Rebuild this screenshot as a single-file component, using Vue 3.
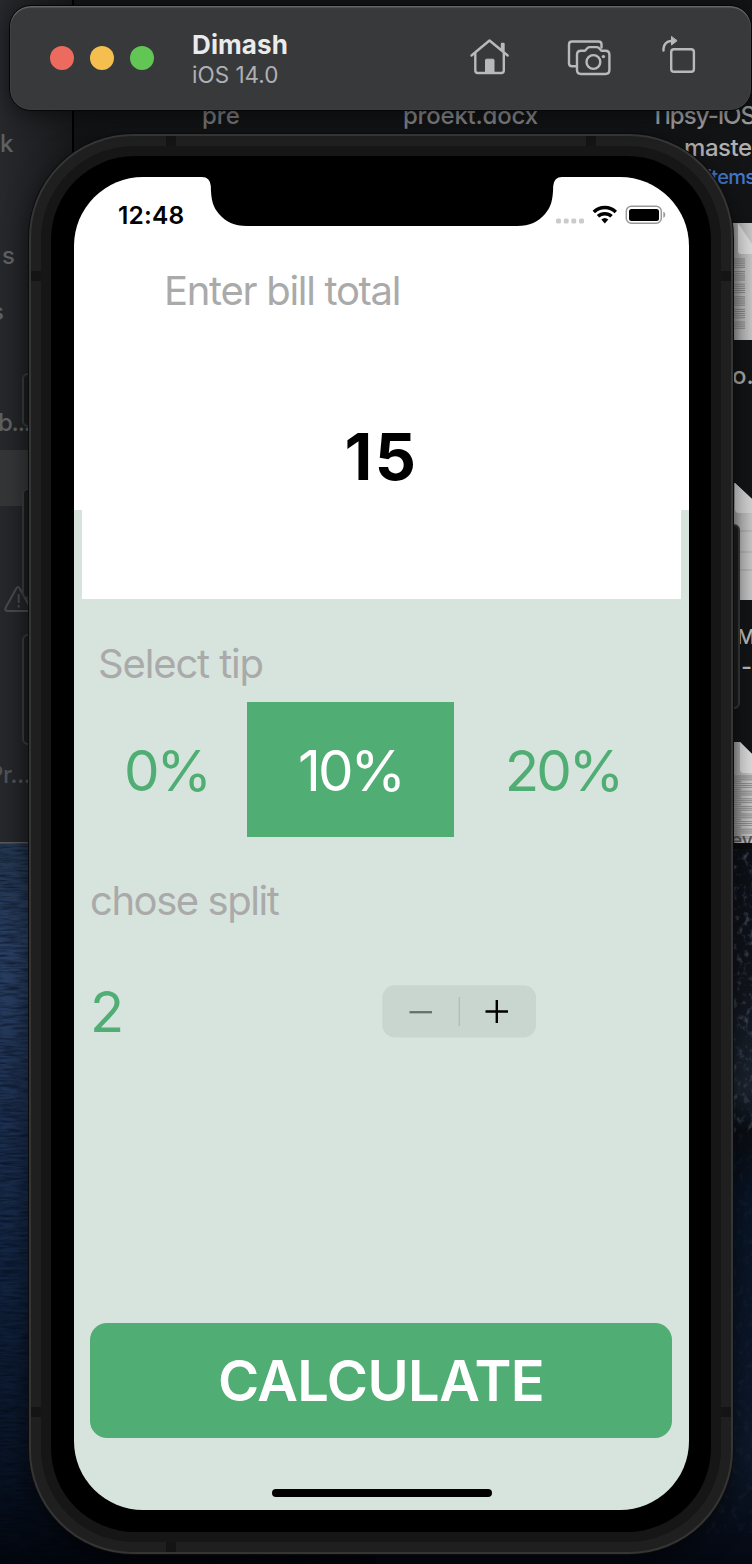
<script setup>
const tips = [
  { label: '0%', kind: 'zero' },
  { label: '10%', kind: 'ten', active: true },
  { label: '20%', kind: 'twenty' }
]
const textLines = Array.from({ length: 34 }, (_, i) => i)
</script>

<template>
  <main class="desktop">
    <svg class="backdrop" width="752" height="1564" viewBox="0 0 752 1564" aria-hidden="true">
      <defs>
        <linearGradient id="sea" x1="0" y1="0" x2="0" y2="1">
          <stop offset="0" stop-color="#23374f" />
          <stop offset=".15" stop-color="#2a4064" />
          <stop offset=".38" stop-color="#1d3050" />
          <stop offset=".6" stop-color="#122440" />
          <stop offset=".85" stop-color="#0a1527" />
          <stop offset="1" stop-color="#03060d" />
        </linearGradient>
        <linearGradient id="rock" x1="0" y1="0" x2="0" y2="1">
          <stop offset="0" stop-color="#0d0f16" />
          <stop offset=".2" stop-color="#11141c" />
          <stop offset=".34" stop-color="#1b242f" />
          <stop offset=".4" stop-color="#0a0d13" />
          <stop offset=".5" stop-color="#081426" />
          <stop offset=".85" stop-color="#0d182a" />
          <stop offset="1" stop-color="#040811" />
        </linearGradient>
        <linearGradient id="side" x1="0" y1="0" x2="1" y2="0">
          <stop offset="0" stop-color="#26282c" />
          <stop offset="1" stop-color="#18191b" />
        </linearGradient>
        <linearGradient id="paper" x1="0" y1="0" x2="1" y2="0">
          <stop offset="0" stop-color="#8d8d8d" />
          <stop offset=".5" stop-color="#b9b9b9" />
          <stop offset="1" stop-color="#c9c9c9" />
        </linearGradient>
        <filter id="waves" x="0" y="0" width="1" height="1" color-interpolation-filters="sRGB">
          <feTurbulence type="fractalNoise" baseFrequency=".05 .4" numOctaves="3" seed="4" />
          <feColorMatrix values="0 0 0 0 0  0 0 0 0 .02  0 0 0 0 .06  2 0 0 0 -.75" />
        </filter>
        <filter id="grit" x="0" y="0" width="1" height="1" color-interpolation-filters="sRGB">
          <feTurbulence type="fractalNoise" baseFrequency=".16 .13" numOctaves="4" seed="9" />
          <feColorMatrix values="0 0 0 0 .28  0 0 0 0 .34  0 0 0 0 .42  3 0 0 0 -1.6" />
        </filter>
      </defs>
      <rect y="843" width="376" height="721" fill="url(#sea)" />
      <rect y="843" width="376" height="721" filter="url(#waves)" opacity=".55" />
      <rect x="376" y="843" width="376" height="721" fill="url(#rock)" />
      <rect x="700" y="843" width="52" height="290" filter="url(#grit)" opacity=".8" />
      <rect x="700" y="1133" width="52" height="400" filter="url(#grit)" opacity=".15" />
      <rect width="74" height="843" fill="url(#side)" />
      <rect y="450" width="60" height="56" fill="#343537" />
      <rect x="74" width="678" height="843" fill="#131416" />
      <rect x="72" width="2" height="843" fill="#000" />
      <rect y="842" width="60" height="1.5" fill="#57585a" />
      <path d="M6 607 16 589q2-4 4 0l10 18q2 4-2 4H8q-4 0-2-4Z" fill="none" stroke="#48494b" stroke-width="2" />
      <path d="M18.700 594v9M18.700 605v2.500" stroke="#48494b" stroke-width="2" />
      <g>
        <path d="M731 223h21v117h-21z" fill="url(#paper)" />
        <path d="M736 223h2v28q0 3 3 3h11v-10l-14-21Z" fill="#ddd" />
        <path d="M731 483h4l17 16v101h-21Z" fill="url(#paper)" />
        <path d="M735 483v26q0 4 4 4h13v-14Z" fill="#d4d4d4" />
        <path d="M731 742h9l12 12v89h-21Z" fill="url(#paper)" />
        <path d="M740 742v27q0 4 4 4h8v-19Z" fill="#ddd" />
        <path v-for="i in textLines" :key="i" :d="`M731 ${259 + i * 2.1}h${i % 6 === 5 ? 0 : 14}`" stroke="#777" stroke-width=".8" />
        <path v-for="i in textLines" :key="'b' + i" :d="`M733 ${776 + i * 1.9}h${i % 4 === 3 ? 8 : 19}`" stroke="#777" stroke-width=".7" />
        <path d="M731 531h21M731 552h21M731 570h21" stroke="#888" stroke-width=".5" />
      </g>
      <g class="finder">
        <text x="202" y="124" fill="#77787a">pre</text>
        <text x="403" y="124" fill="#858688" textLength="135">proekt.docx</text>
        <text x="650" y="124" fill="#a1a1a2" textLength="106">Tipsy-iOS</text>
        <text x="684" y="156" fill="#b0b0b0" textLength="77">master</text>
        <text x="707" y="184" fill="#4477cf" font-size="20" textLength="49">items</text>
        <text x="732" y="384" fill="#aaa">o.</text>
        <text x="737" y="644" fill="#bbb" font-size="20">M</text>
        <text x="741" y="675" fill="#bbb">-</text>
        <text x="731" y="847" fill="#555" font-size="19">ev</text>
        <text x="0" y="152" fill="#5f6062">k</text>
        <text x="2" y="264" fill="#5f6062">s</text>
        <text x="-9" y="320" fill="#5f6062">s</text>
        <text x="-2" y="431" fill="#5f6062" textLength="33">b...</text>
        <text x="-12" y="783" fill="#4f5052" textLength="43">Pr...</text>
      </g>
      <rect y="843" x="731" width="21" height="6" fill="#0b0c10" />
    </svg>

    <i class="side-button mute"></i>
    <i class="side-button volume-up"></i>
    <i class="side-button volume-down"></i>
    <i class="side-button power"></i>

    <section class="device">
      <i class="band band-top-left"></i><i class="band band-top-right"></i>
      <i class="band band-left-top"></i><i class="band band-right-top"></i>
      <i class="band band-left-bottom"></i><i class="band band-right-bottom"></i>
      <i class="band band-bottom"></i>
      <div class="rim">
        <div class="bezel">
          <div class="screen">
            <svg class="notch" width="366" height="50" viewBox="199 176 366 50" aria-hidden="true">
              <path d="M199 176V177H202Q210 177 210.8 186C211 200 213 207 219 214 226 222 234 226 247 226H517C530 226 538 222 545 214 551 207 553 200 553.2 186Q554 177 562 177H565V176Z" />
            </svg>
            <header class="status">
              <time>12:48</time>
              <svg width="112" height="24" viewBox="555 203 112 24" aria-hidden="true">
                <g fill="#cbcbcb">
                  <rect x="556" y="218.5" width="5" height="5" rx="1.6" /><rect x="563.7" y="218.5" width="5" height="5" rx="1.6" />
                  <rect x="571.3" y="218.5" width="5" height="5" rx="1.6" /><rect x="579" y="218.5" width="5" height="5" rx="1.6" />
                </g>
                <g fill="none" stroke="#000" stroke-width="3.5">
                  <path d="M593.8 211.9a16 16 0 0 1 22 0" />
                  <path d="M598 216.3a10 10 0 0 1 13.6 0" />
                </g>
                <path d="M601.3 219.6a5.2 5.2 0 0 1 7 0L604.8 223.4Z" />
                <rect x="626.3" y="206.3" width="35" height="17" rx="5" fill="none" stroke="#999" stroke-width="1.5" />
                <rect x="629" y="209" width="30" height="12" rx="2.5" />
                <path d="M663.3 211.5q2 1 2 3.2t-2 3.2Z" fill="#999" />
              </svg>
            </header>

            <p class="label bill-label"><span>Enter bill total</span></p>
            <div class="amount"><span>15</span></div>
            <p class="label tip-label"><span>Select tip</span></p>
            <div class="tips">
              <button v-for="tip in tips" :key="tip.kind" :class="['tip', tip.kind, { active: tip.active }]">{{ tip.label }}</button>
            </div>
            <p class="label split-label"><span>chose split</span></p>
            <div class="split">
              <output>2</output>
              <svg class="stepper" width="155" height="53" viewBox="0 0 155 53">
                <rect x=".3" y=".3" width="153.8" height="52.2" rx="12.5" fill="#c9d5cf" />
                <path d="M27.5 27.2H50" stroke="#69706c" stroke-width="2.3" />
                <path d="M77.3 12v29" stroke="#b4bfbc" stroke-width="1.5" />
                <path d="M103.5 26.5H126M114.8 15v23" stroke="#000" stroke-width="2.4" />
              </svg>
            </div>
            <button class="calculate"><span>CALCULATE</span></button>
            <i class="home-indicator"></i>
          </div>
        </div>
      </div>
    </section>

    <nav class="toolbar">
      <div class="lights"><i class="red"></i><i class="yellow"></i><i class="green"></i></div>
      <div class="title"><strong>Dimash</strong><small>iOS 14.0</small></div>
      <svg class="tools" width="230" height="42" viewBox="468 34 230 42" fill="none" stroke="#b9b9bb" stroke-width="2.4" stroke-linejoin="round" stroke-linecap="round" aria-hidden="true">
        <path d="M471.5 54.5 489.5 39.5 507.7 54.5M475.3 52v17.5q0 2.5 2.5 2.5h23.5q2.5 0 2.5-2.5V52M502 49v-6h1.5v7" />
        <path d="M485.5 72V59.200q0-1 1-1h6.500q1 0 1 1V72Z" fill="#b9b9bb" stroke-width="1" />
        <path d="M576 65.200h-4q-3 0-3-3V43.500q0-3 3-3h26.500q3 0 3 3v3" />
        <path d="M581 49.800h4l2.500-2.800q.9-.9 2.200-.9h7q1.300 0 2.200.9l2.500 2.800h4q4 0 4 4v15.200q0 4-4 4H581q-4 0-4-4V53.800q0-4 4-4Z" />
        <circle cx="593.400" cy="61" r="6.900" />
        <circle cx="603.400" cy="55.600" r="1.700" fill="#b9b9bb" stroke="none" />
        <rect x="671.200" y="48.300" width="22.700" height="22.500" rx="2.800" />
        <path d="M663.500 49.500V47.500Q664.500 40.500 671 40" />
        <path d="M671.500 35.800v8.200l5.300-4.100Z" fill="#b9b9bb" stroke-width="1" />
      </svg>
    </nav>
  </main>
</template>

<style>
html, body { margin: 0; background: #060b16; }
</style>

<style scoped>
* { box-sizing: border-box; }
.desktop { position: relative; width: 752px; height: 1564px; overflow: hidden; font-family: Inter, "Liberation Sans", sans-serif; }
.backdrop { position: absolute; inset: 0; }
.finder { font-size: 24px; font-weight: 500; }
p { margin: 0; }
button { border: 0; padding: 0; background: none; font: inherit; letter-spacing: inherit; }

/* Simulator window chrome */
.toolbar { position: absolute; left: 9px; top: 5px; width: 743px; height: 106px; display: flex; align-items: center; background: #38393b; border: 1px solid #060606; border-radius: 22px; box-shadow: inset 0 1.5px 1px #666769, inset 0 0 1px #5c5d5f, 0 4px 22px rgba(0, 0, 0, .5); }
.lights { display: flex; gap: 16px; margin-left: 40px; }
.lights i { width: 24px; height: 24px; border-radius: 50%; }
.red { background: #ed6a5f; }
.yellow { background: #f5bf4f; }
.green { background: #61c654; }
.title { display: flex; flex-direction: column; width: 276px; margin-left: 38px; padding-top: 2px; color: #ebebec; }
.title strong { font-size: 26px; line-height: 30px; font-weight: 700; letter-spacing: .1px; }
.title small { font-size: 22.500px; line-height: 29px; color: #b0b0b2; letter-spacing: 0; }
.tools { display: block; margin-bottom: 5px; }

/* Phone body */
.device { position: absolute; left: 29px; top: 134px; width: 704px; height: 1420px; padding: 10px; background: #1f1f1f; border: 2px solid #353535; border-radius: 104px; box-shadow: 0 0 0 1px #0c0c0c, 0 8px 26px rgba(0, 0, 0, .6); }
.rim { height: 100%; padding: 10px; background: #161616; border-radius: 93px; }
.bezel { height: 100%; padding: 21px 22px 22px 23px; background: #000; border-radius: 84px; }
.band { position: absolute; background: #141414; }
.band-top-left, .band-top-right { top: 0; width: 10px; height: 10px; }
.band-top-left { left: 135px; }
.band-top-right { left: 555px; }
.band-left-top, .band-right-top { top: 135px; width: 10px; height: 10px; }
.band-left-top, .band-left-bottom { left: 0; }
.band-right-top, .band-right-bottom { right: 0; }
.band-left-bottom, .band-right-bottom { top: 1271px; width: 10px; height: 10px; }
.band-bottom { bottom: 0; left: 135px; width: 10px; height: 10px; }
.side-button { position: absolute; left: 22px; width: 12px; background: #1c1d1e; border: 2px solid #3a3b3c; border-radius: 6px; }
.mute { top: 373px; height: 54px; }
.volume-up { top: 488px; height: 111px; }
.volume-down { top: 634px; height: 111px; }
.power { left: 728px; top: 524px; height: 185px; }

/* App */
.screen { position: relative; display: flex; flex-direction: column; width: 615px; height: 1333px; overflow: hidden; border-radius: 69px; background: linear-gradient(#fff 0 333px, #d7e4dd 333px); }
.notch { position: absolute; left: 125px; top: -1px; }
.status { display: flex; justify-content: space-between; align-items: center; height: 76px; padding: 0 22px 0 44px; }
.status time { font-size: 24.500px; font-weight: 600; letter-spacing: .2px; }
.label { display: flex; align-items: center; color: #aaa; font-size: 40px; letter-spacing: -1.3px; line-height: 48px; white-space: nowrap; }
.bill-label { height: 61px; padding: 15px 0 0 90px; }
.amount { display: flex; align-items: center; justify-content: center; height: 285px; margin: 0 8px; background: #fff; font-size: 64.500px; font-weight: 650; letter-spacing: 2.500px; }
.tip-label { height: 103px; padding: 26px 0 0 24px; letter-spacing: -1.150px; }
.tips { display: flex; height: 135px; padding-left: 12px; color: #50ad73; font-size: 56.500px; letter-spacing: -3px; }
.tip { display: flex; align-items: center; justify-content: center; padding-top: 2px; color: inherit; }
.zero { width: 161px; }
.ten { width: 207px; }
.twenty { width: 218px; }
.active { background: #50ad73; color: #fff; }
.split-label { height: 148px; padding: 0 0 20px 16px; letter-spacing: -1.450px; }
.split { display: flex; justify-content: space-between; align-items: center; height: 53px; padding: 0 152px 0 16px; color: #50ad73; font-size: 56px; }
.calculate { display: flex; align-items: center; justify-content: center; width: 582px; height: 115px; margin: 285px 0 0 16px; border-radius: 17px; background: #50ad73; color: #fff; font-size: 56px; font-weight: 560; letter-spacing: -.6px; }
.home-indicator { width: 220px; height: 8px; margin: 51px 0 0 198px; border-radius: 4px; background: #000; }
</style>
